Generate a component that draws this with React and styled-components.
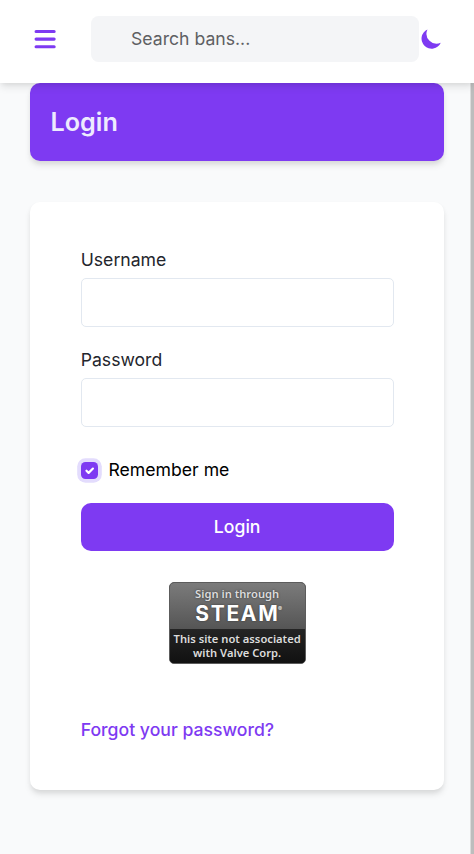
import React from "react";
import styled, { createGlobalStyle, css } from "styled-components";

const GlobalStyle = createGlobalStyle`
  *, *::before, *::after { box-sizing: border-box; }
  html, body { margin: 0; overflow: hidden; }
  body {
    background: #f9fafb;
    color: #000;
    font-family: Inter, sans-serif;
    font-size: 17.64px;
    line-height: 26.46px;
  }
  input, button { font: inherit; }
`;

const cardShadow = css`
  box-shadow: 0 5px 7.6px -1.3px rgba(0, 0, 0, 0.1), 0 2.5px 5px -1.3px rgba(0, 0, 0, 0.06);
`;

const Page = styled.div`
  display: flex;
  flex-direction: column;
  height: 854px;
  overflow: hidden;
`;

const Header = styled.header`
  display: flex;
  align-items: flex-start;
  flex: none;
  height: 82.6px;
  padding: 16px 30.2px 0;
  background: #fff;
  z-index: 1;
  ${cardShadow}
`;

const IconButton = styled.button`
  display: flex;
  flex: none;
  padding: 0;
  border: 0;
  background: none;
  color: #7e3af2;
  margin-top: ${(p) => p.$top};
  svg { display: block; width: ${(p) => p.$size}; height: ${(p) => p.$size}; }
`;

const SearchInput = styled.input`
  flex: 1;
  min-width: 0;
  height: 46px;
  margin-left: 30.3px;
  padding: 0 10px 1.6px 40.3px;
  border: 0;
  border-radius: 7.6px;
  background: #f4f5f7;
  outline: none;
  &::placeholder { color: #5e6063; opacity: 1; }
`;

const Body = styled.div`
  display: flex;
  flex: 1;
  min-height: 0;
`;

const Main = styled.main`
  flex: 1;
  padding: 0 25.6px 0 30.3px;
`;

const ScrollTrack = styled.div`
  flex: none;
  width: 4.5px;
  border-left: 1px solid #dcdcdc;
  background: #bdbdbd;
`;

const Banner = styled.section`
  display: flex;
  align-items: center;
  height: 78.4px;
  padding: 1px 20.2px 0;
  border-radius: 10px;
  background: #7e3af2;
  color: #edebfe;
  ${cardShadow}
`;

const Title = styled.h1`
  margin: 0;
  font-size: 25.2px;
  font-weight: 600;
  line-height: 1;
`;

const Card = styled.form`
  display: flex;
  flex-direction: column;
  height: 588.4px;
  margin-top: 40.6px;
  padding: 45.2px 50.3px 0 50.4px;
  border-radius: 10px;
  background: #fff;
  ${cardShadow}
`;

const Field = styled.label`
  display: block;
  height: 100px;
  color: #24262d;
`;

const TextInput = styled.input`
  display: block;
  width: 100%;
  height: 48.4px;
  margin-top: 5px;
  padding: 0 15px;
  border: 1px solid #e2e8f0;
  border-radius: 5px;
  background: #fff;
  outline: none;
`;

const Remember = styled.div`
  display: flex;
  align-items: center;
  height: 27px;
  margin-top: 10px;
`;

const CheckBox = styled.span`
  display: flex;
  width: 17.4px;
  height: 17.4px;
  margin-right: 10.4px;
  border-radius: 4.5px;
  background: #7e3af2;
  box-shadow: 0 0 0 3.8px #e3dcfd;
  svg { width: 100%; height: 100%; }
`;

const SubmitButton = styled.button`
  flex: none;
  height: 47.2px;
  margin-top: 19.6px;
  padding: 0;
  border: 0;
  border-radius: 10px;
  background: #7e3af2;
  color: #fff;
  font-weight: 500;
`;

const SteamButton = styled.button`
  display: flex;
  flex-direction: column;
  flex: none;
  align-self: center;
  width: 137px;
  height: 82px;
  margin-top: 31.3px;
  padding: 0;
  overflow: hidden;
  border: 1px solid #5c5c5c;
  border-radius: 5px;
  background: #1b1b1b;
  color: #dcdcdc;
  font-family: "Noto Sans", sans-serif;
  font-weight: 600;
  font-size: 11.2px;
  line-height: 14px;
  text-align: center;
`;

const SteamTop = styled.span`
  display: flex;
  flex-direction: column;
  align-items: center;
  width: 100%;
  height: 46px;
  padding-top: 4px;
  background: linear-gradient(#7b7b7b, #555);
  text-shadow: 0 0 2px #333;
`;

const SteamLine = styled.span`
  display: block;
  height: 14px;
`;

const SteamName = styled.span`
  display: flex;
  align-items: flex-start;
  padding-left: 3px;
  color: #fff;
  font-family: Inter, sans-serif;
  font-size: 21px;
  font-weight: 700;
  line-height: 25px;
  letter-spacing: 1.7px;
`;

const Registered = styled.span`
  margin: 4px 0 0 -1.5px;
  font-size: 6px;
  font-weight: 400;
  line-height: 8px;
  letter-spacing: 0;
`;

const SteamNote = styled.span`
  display: flex;
  flex-direction: column;
  width: 100%;
  flex: 1;
  padding-top: 3px;
  background: linear-gradient(#242424, #111);
  white-space: nowrap;
`;

const ForgotLink = styled.a`
  margin-top: 53.1px;
  color: #7e3af2;
  font-weight: 500;
`;

export default function App() {
  return (
    <>
      <GlobalStyle />
      <Page>
        <Header>
          <IconButton type="button" aria-label="Menu" $size="30.24px" $top="8.3px">
            <svg viewBox="0 0 20 20" fill="currentColor">
              <path fillRule="evenodd" d="M3 5a1 1 0 011-1h12a1 1 0 110 2H4a1 1 0 01-1-1zM3 10a1 1 0 011-1h12a1 1 0 110 2H4a1 1 0 01-1-1zM3 15a1 1 0 011-1h12a1 1 0 110 2H4a1 1 0 01-1-1z" />
            </svg>
          </IconButton>
          <SearchInput placeholder="Search bans..." aria-label="Search" />
          <IconButton type="button" aria-label="Toggle color mode" $size="25.2px" $top="10.3px">
            <svg viewBox="0 0 20 20" fill="currentColor">
              <path d="M17.293 13.293A8 8 0 016.707 2.707a8.001 8.001 0 1010.586 10.586z" />
            </svg>
          </IconButton>
        </Header>
        <Body>
          <Main>
            <Banner>
              <Title>Login</Title>
            </Banner>
            <Card>
              <Field>
                Username
                <TextInput type="text" />
              </Field>
              <Field>
                Password
                <TextInput type="password" />
              </Field>
              <Remember>
                <CheckBox role="checkbox" aria-checked="true" aria-label="Remember me">
                  <svg viewBox="0 0 16 16" fill="#fff">
                    <path d="M5.707 7.293a1 1 0 0 0-1.414 1.414l2 2a1 1 0 0 0 1.414 0l4-4a1 1 0 0 0-1.414-1.414L7 8.586 5.707 7.293z" />
                  </svg>
                </CheckBox>
                Remember me
              </Remember>
              <SubmitButton type="button">Login</SubmitButton>
              <SteamButton type="button">
                <SteamTop>
                  <SteamLine>Sign in through</SteamLine>
                  <SteamName>
                    STEAM
                    <Registered>®</Registered>
                  </SteamName>
                </SteamTop>
                <SteamNote>
                  <SteamLine>This site not associated</SteamLine>
                  <SteamLine>with Valve Corp.</SteamLine>
                </SteamNote>
              </SteamButton>
              <ForgotLink>Forgot your password?</ForgotLink>
            </Card>
          </Main>
          <ScrollTrack />
        </Body>
      </Page>
    </>
  );
}
